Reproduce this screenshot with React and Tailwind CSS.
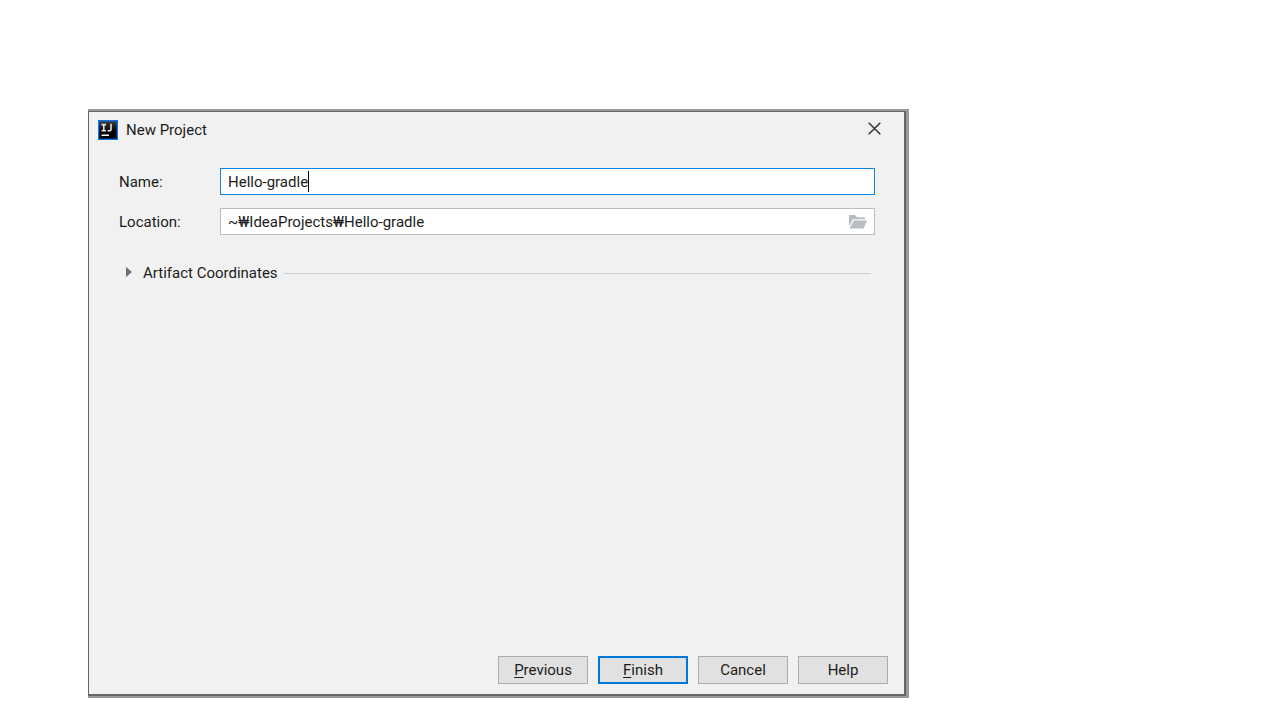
const BUTTONS = [
  { label: 'Previous', mnemonic: true },
  { label: 'Finish', mnemonic: true, primary: true },
  { label: 'Cancel' },
  { label: 'Help' },
]

function AppIcon() {
  return (
    <svg className="size-5" viewBox="0 0 20 20" aria-hidden="true">
      <defs>
        <linearGradient id="tile" x1="0" y1="0" x2="0" y2="1">
          <stop offset="0" stopColor="#3c3c3c" />
          <stop offset="0.6" stopColor="#000" />
        </linearGradient>
      </defs>
      <rect width="20" height="20" fill="#0a78f0" />
      <rect x="1.3" y="1.3" width="17.4" height="17.4" fill="url(#tile)" />
      <path
        d="M3.5 4.6H8M5.75 4.6v6.2M3.5 10.8H8M13 3.8v5.2q0 1.8-1.8 1.8h-1.7"
        fill="none"
        stroke="#e4e4e4"
        strokeWidth="1.6"
      />
      <rect x="3.5" y="14.5" width="7.5" height="1.5" fill="#fff" />
    </svg>
  )
}

function FolderIcon() {
  return (
    <svg className="h-[14px] w-[18px]" viewBox="0 0 18 14" fill="#b8bdc1" aria-hidden="true">
      <path d="M0 0h6l2 2.2h8v2H4L0 11.5z" />
      <path d="M4.8 5.5H18L14.5 13.5H.5z" />
    </svg>
  )
}

function ButtonLabel({ label, mnemonic }) {
  if (!mnemonic) return label
  return (
    <>
      <span className="underline underline-offset-2">{label[0]}</span>
      {label.slice(1)}
    </>
  )
}

export default function App() {
  return (
    <main className="flex min-h-screen bg-white pt-[109px] pr-[371px] pb-[22px] pl-[88px] font-[Roboto,'Noto_Sans_CJK_KR',sans-serif] text-[15px] leading-5 text-[#1c1c1c]">
      <div className="flex flex-1 bg-[#999] pt-0.5 pr-[3px] pb-0.5">
        <section
          role="dialog"
          aria-labelledby="dialog-title"
          className="flex flex-1 flex-col border-t border-r-2 border-b-2 border-l border-[#666] bg-[#f1f1f1]"
        >
          <header className="flex items-center gap-2 pt-2 pr-[19px] pl-[9px]">
            <AppIcon />
            <h1 id="dialog-title" className="flex-1">New Project</h1>
            <button type="button" aria-label="Close" className="px-1 pb-1">
              <svg className="size-[13px]" viewBox="0 0 13 13" fill="none" stroke="#333" strokeWidth="1.5" aria-hidden="true">
                <path d="M.7.7l11.6 11.6M12.3.7L.7 12.3" />
              </svg>
            </button>
          </header>

          <form className="flex flex-1 flex-col pt-7 pr-4 pb-2.5 pl-[30px]">
            <div className="grid grid-cols-[101px_1fr] items-center gap-y-[13px] pr-[13px]">
              <label htmlFor="name">Name:</label>
              <div className="flex h-[27px] items-center border border-[#0f86e0] bg-white px-[7px]">
                <input id="name" defaultValue="Hello-gradle" className="field-sizing-content outline-none" />
                <span className="h-[21px] w-px bg-black" />
              </div>

              <label htmlFor="location">Location:</label>
              <div className="flex h-[27px] items-center border border-[#bdbdbd] bg-white px-[7px]">
                <input id="location" defaultValue="~₩IdeaProjects₩Hello-gradle" className="min-w-0 flex-1 outline-none" />
                <button type="button" aria-label="Browse">
                  <FolderIcon />
                </button>
              </div>
            </div>

            <div className="mt-7 flex items-center gap-1.5 pr-[17px] pl-[7px]">
              <button type="button" aria-expanded="false" className="flex items-center gap-[11px]">
                <svg className="h-3 w-1.5" viewBox="0 0 6 12" fill="#6e6e6e" aria-hidden="true">
                  <path d="M0 0l6 5-6 5z" />
                </svg>
                Artifact Coordinates
              </button>
              <span className="h-px flex-1 bg-[#cfcfcf]" />
            </div>

            <footer className="mt-auto flex justify-end gap-2.5">
              {BUTTONS.map(({ label, mnemonic, primary }) => (
                <button
                  key={label}
                  type="button"
                  className={
                    primary
                      ? 'h-7 w-[90px] border-2 border-[#0078d7] bg-[#e1e1e1]'
                      : 'h-7 w-[90px] border border-[#adadad] bg-[#e1e1e1]'
                  }
                >
                  <ButtonLabel label={label} mnemonic={mnemonic} />
                </button>
              ))}
            </footer>
          </form>
        </section>
      </div>
    </main>
  )
}
